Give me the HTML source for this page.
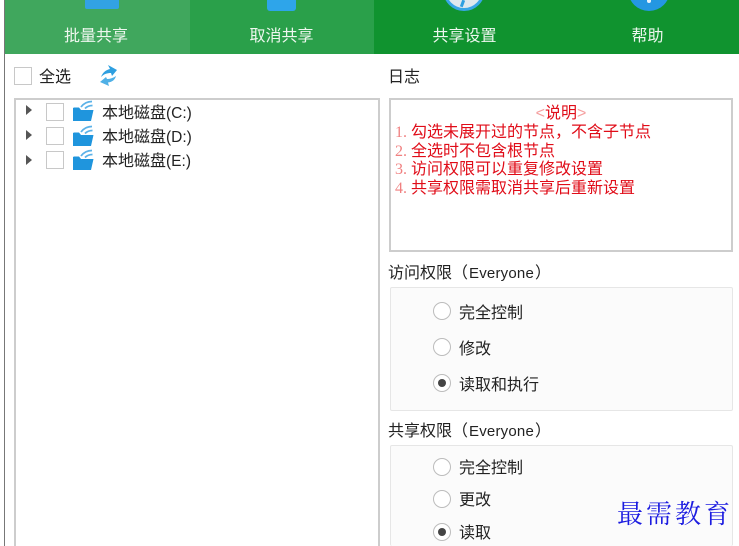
<!DOCTYPE html>
<html lang="zh">
<head>
<meta charset="utf-8">
<style>
html,body{margin:0;padding:0;background:#fff;width:739px;height:546px;overflow:hidden}
#p{position:relative;width:739px;height:546px;overflow:hidden;background:#fff;font-family:"Liberation Sans","Noto Sans CJK SC",sans-serif;color:#222;filter:blur(.35px)}
.a{position:absolute}
.t{position:absolute;white-space:nowrap;line-height:20px;font-size:16px}
.tab{position:absolute;top:0;height:54px}
.tl{position:absolute;top:27px;left:0;right:0;text-align:center;color:#eef7ef;font-size:16px;line-height:20px}
.cb{position:absolute;box-sizing:border-box;width:18px;height:18px;border:1.5px solid #c8c8c8;background:#fff}
.r{position:absolute;box-sizing:border-box;width:18px;height:18px;border:1.5px solid #bcbcbc;border-radius:50%;background:#fff;left:433px}
.r.on::after{content:"";position:absolute;left:3.5px;top:3.5px;width:8px;height:8px;border-radius:50%;background:#444}
.arrow{position:absolute;left:26px;width:0;height:0;border-left:6px solid #555;border-top:5px solid transparent;border-bottom:5px solid transparent}
.red{position:absolute;left:395px;white-space:nowrap;font:16px/19px "Liberation Serif","Noto Sans CJK SC",serif;color:#e00c18}
.red b{font-weight:400;color:#f08080;display:inline-block;width:16px}
.grp{position:absolute;box-sizing:border-box;left:390px;width:343px;border:1px solid #e6e6e6;background:#fbfbfb;border-radius:2px}
.en{font-size:15px;letter-spacing:.2px;margin:0 1px 0 1px}
</style>
</head>
<body>
<div id="p">
<div class="a" style="left:4px;top:0;width:1px;height:546px;background:#777"></div>

<div class="tab" style="left:5px;width:185px;background:#40a75d">
  <div class="a" style="left:80px;top:0;width:34px;height:9px;background:#32a2e4;border-radius:0 0 2px 2px"></div>
  <div class="tl" style="left:-3px">批量共享</div>
</div>
<div class="tab" style="left:190px;width:184px;background:#2aa04a">
  <div class="a" style="left:77px;top:0;width:29px;height:11px;background:#2ea5ea;border-radius:0 0 3px 3px"></div>
  <div class="tl" style="left:-1px">取消共享</div>
</div>
<div class="tab" style="left:374px;width:181px;background:#10932f;overflow:hidden">
  <div class="a" style="left:69px;top:-31px;width:42px;height:42px;box-sizing:border-box;border-radius:50%;background:#dfe8ee;border:3px solid #38a6e6"></div>
  <div class="a" style="left:87px;top:0;width:3px;height:7px;background:#2f9fe0;transform:rotate(20deg)"></div>
  <div class="tl">共享设置</div>
</div>
<div class="tab" style="left:555px;width:184px;background:#10932f;overflow:hidden">
  <div class="a" style="left:73px;top:-31px;width:42px;height:42px;border-radius:50%;background:#2497e2"></div>
  <div class="a" style="left:92px;top:0;width:4px;height:3px;background:#e6f3fb;border-radius:0 0 2px 2px"></div>
  <div class="tl" style="left:1px">帮助</div>
</div>

<div class="cb" style="left:14px;top:67px"></div>
<div class="t" style="left:39px;top:68px;color:#222">全选</div>
<svg class="a" style="left:98px;top:63px" width="21" height="24" viewBox="0 0 21 24">
  <path d="M3 14C5 9 8 7 12 6L10 2L19 7L14 13L13 10C9 10 6 11 3 14Z" fill="#2e9fe0"/>
  <path d="M18 13C17 17 14 19 10 19.500L11 23L2 19L8 14L9 16C12 16 15 15 18 13Z" fill="#4fb0e6"/>
</svg>

<div class="a" style="left:14px;top:98px;width:366px;height:448px;box-sizing:border-box;border:2px solid #cdcdcd;border-bottom:none"></div>

<div class="arrow" style="top:105px"></div>
<div class="cb" style="left:46px;top:103px"></div>
<svg class="a" style="left:72px;top:100px" width="23" height="22" viewBox="0 0 23 22">
  <path d="M1 8V21H19L21.500 10H9L7 7.500H2Z" fill="#1f95dd"/>
  <path d="M9 7C12 3 16 1.500 20 1.500M13 8.500C15 6.500 18 5.500 20.500 5.500" stroke="#5bb2e8" stroke-width="1.800" fill="none"/>
</svg>
<div class="t" style="left:102px;top:104px">本地磁盘<span style="font-size:15.500px">(C:)</span></div>

<div class="arrow" style="top:130px"></div>
<div class="cb" style="left:46px;top:127px"></div>
<svg class="a" style="left:72px;top:125px" width="23" height="22" viewBox="0 0 23 22">
  <path d="M1 8V21H19L21.500 10H9L7 7.500H2Z" fill="#1f95dd"/>
  <path d="M9 7C12 3 16 1.500 20 1.500M13 8.500C15 6.500 18 5.500 20.500 5.500" stroke="#5bb2e8" stroke-width="1.800" fill="none"/>
</svg>
<div class="t" style="left:102px;top:128px">本地磁盘<span style="font-size:15.500px">(D:)</span></div>

<div class="arrow" style="top:155px"></div>
<div class="cb" style="left:46px;top:151px"></div>
<svg class="a" style="left:72px;top:149px" width="23" height="22" viewBox="0 0 23 22">
  <path d="M1 8V21H19L21.500 10H9L7 7.500H2Z" fill="#1f95dd"/>
  <path d="M9 7C12 3 16 1.500 20 1.500M13 8.500C15 6.500 18 5.500 20.500 5.500" stroke="#5bb2e8" stroke-width="1.800" fill="none"/>
</svg>
<div class="t" style="left:102px;top:152px">本地磁盘<span style="font-size:15.500px">(E:)</span></div>

<div class="t" style="left:388px;top:68px">日志</div>
<div class="a" style="left:389px;top:98px;width:344px;height:154px;box-sizing:border-box;border:2px solid #cdcdcd"></div>
<div class="red" style="left:389px;width:344px;text-align:center;top:104px;font-family:'Liberation Sans','Noto Sans CJK SC',sans-serif"><span style="color:#f5a0a0">&lt;</span>说明<span style="color:#f5a0a0">&gt;</span></div>
<div class="red" style="top:123px"><b>1.</b>勾选未展开过的节点，不含子节点</div>
<div class="red" style="top:142px"><b>2.</b>全选时不包含根节点</div>
<div class="red" style="top:160px"><b>3.</b>访问权限可以重复修改设置</div>
<div class="red" style="top:179px"><b>4.</b>共享权限需取消共享后重新设置</div>

<div class="t" style="left:388px;top:264px">访问权限（<span class="en">Everyone</span>）</div>
<div class="grp" style="top:287px;height:124px"></div>
<div class="r" style="top:302px"></div><div class="t" style="left:459px;top:304px">完全控制</div>
<div class="r" style="top:338px"></div><div class="t" style="left:459px;top:340px">修改</div>
<div class="r on" style="top:374px"></div><div class="t" style="left:459px;top:376px">读取和执行</div>

<div class="t" style="left:388px;top:422px">共享权限（<span class="en">Everyone</span>）</div>
<div class="grp" style="top:445px;height:101px;border-bottom:none"></div>
<div class="r" style="top:458px"></div><div class="t" style="left:459px;top:459px">完全控制</div>
<div class="r" style="top:490px"></div><div class="t" style="left:459px;top:491px">更改</div>
<div class="r on" style="top:523px"></div><div class="t" style="left:459px;top:524px">读取</div>

<div class="t" style="left:617px;top:498px;font-size:26px;line-height:34px;letter-spacing:3px;color:#1c1ce0;font-family:'Liberation Serif','Noto Serif CJK SC',serif">最需教育</div>
</div>
</body>
</html>
